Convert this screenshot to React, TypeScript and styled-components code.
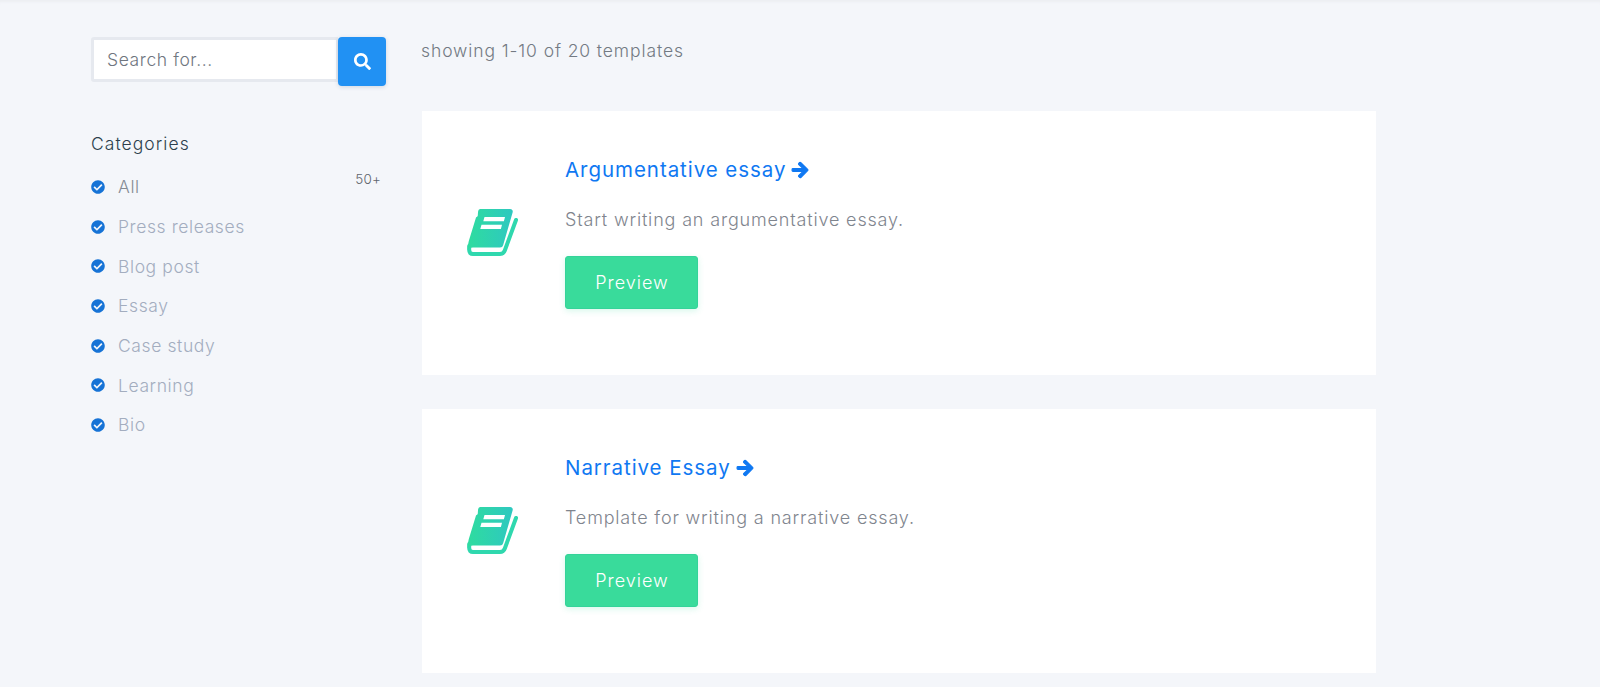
import React from 'react'
import styled, { createGlobalStyle } from 'styled-components';
import { FaArrowRight, FaCheckCircle, FaSearch } from 'react-icons/fa';

const CATEGORIES = ['All', 'Press releases', 'Blog post', 'Essay', 'Case study', 'Learning', 'Bio'];

const TEMPLATES = [
    { title: 'Argumentative essay', text: 'Start writing an argumentative essay.' },
    { title: 'Narrative Essay', text: 'Template for writing a narrative essay.' },
];

const GlobalStyle = createGlobalStyle`
    html, body {
        margin: 0;
        height: 687px;
        overflow: hidden;
        background: #f4f6fa;
        font-family: Inter, "Open Sans", sans-serif;
    }
`;

const Page = styled.div`
    height: 687px;
    box-sizing: border-box;
    padding: 37px 0 0 91px;
    display: flex;
    overflow: hidden;
    box-shadow: inset 0 4px 3px -2px #eceef2;
`;

const Sidebar = styled.aside`
    width: 331px;
    flex: none;
`;

const SearchRow = styled.div`
    display: flex;
    width: 295px;
    align-items: flex-start;
`;

const SearchInput = styled.input`
    width: 247px;
    height: 45px;
    box-sizing: border-box;
    border: 3px solid #e6e9ef;
    border-right-width: 2px;
    border-radius: 3px 0 0 3px;
    padding: 0 13px;
    background: #fff;
    font: 300 17.5px Inter, sans-serif;
    letter-spacing: 0.6px;
    outline: none;

    &::placeholder {
        color: #6f7680;
        opacity: 1;
    }
`;

const SearchButton = styled.button`
    width: 48px;
    height: 49px;
    border: 0;
    padding: 0;
    border-radius: 4px;
    background: #2191f3;
    color: #fff;
    display: flex;
    align-items: center;
    justify-content: center;
    font-size: 17px;
    box-shadow: 0 1px 4px rgba(60, 90, 130, 0.2);
`;

const SideTitle = styled.h3`
    margin: 46px 0 0;
    font-size: 17.5px;
    line-height: 24px;
    font-weight: 300;
    letter-spacing: 1.05px;
    color: #2c3f4d;
`;

const CategoryList = styled.ul`
    list-style: none;
    width: 290px;
    margin: 11px 0 0;
    padding: 0;
`;

const CategoryItem = styled.li<{ $active?: boolean }>`
    position: relative;
    height: 39.7px;
    display: flex;
    align-items: center;
    gap: 13px;
    font-size: 17.5px;
    font-weight: 300;
    letter-spacing: 0.6px;
    color: ${p => (p.$active ? '#858b94' : '#a3adbf')};

    svg {
        color: #1673d6;
        font-size: 14px;
        flex: none;
    }
`;

const Count = styled.span`
    position: absolute;
    right: 0;
    top: 4px;
    font-size: 13.5px;
    font-weight: 300;
    letter-spacing: 0.2px;
    color: #5f656d;
`;

const Content = styled.main`
    width: 954px;
    flex: none;
`;

const Showing = styled.p`
    margin: 0 0 46px;
    height: 28px;
    line-height: 28px;
    font-size: 17.5px;
    font-weight: 300;
    letter-spacing: 0.9px;
    color: #737a83;
    transform: translateX(-1px);
`;

const Card = styled.section`
    height: 264px;
    box-sizing: border-box;
    margin-bottom: 34px;
    padding: 33px 46px 55px 45px;
    background: #fff;
    display: flex;
    align-items: center;
`;

const IconBox = styled.div`
    width: 98px;
    flex: none;
    display: flex;
`;

const CardBody = styled.div``;

const CardTitle = styled.h4`
    margin: 0;
    display: flex;
    align-items: center;
    gap: 5px;
    font-size: 20.5px;
    line-height: 30px;
    font-weight: 400;
    letter-spacing: 0.95px;
    color: #0f78f2;

    svg {
        font-size: 18px;
        stroke-width: 36px;
        stroke-linejoin: round;
    }
`;

const CardText = styled.p`
    margin: 22px 0 0;
    font-size: 18px;
    line-height: 26px;
    font-weight: 300;
    letter-spacing: 0.83px;
    color: #7f858e;
`;

const PreviewButton = styled.button`
    display: block;
    width: 133px;
    height: 53px;
    margin-top: 23px;
    padding: 0 0 0 1px;
    border: 1px solid #34d399;
    border-radius: 3px;
    background: #39db9b;
    color: #fff;
    font: 300 18px/1 Inter, sans-serif;
    letter-spacing: 1px;
    box-shadow: 0 2px 6px rgba(57, 219, 155, 0.2);
`;

const BookIcon: React.FC<{ id: string }> = ({ id }) => (
    <svg width="51" height="47" viewBox="0 0 51 47">
        <defs>
            <linearGradient id={id} x1="0" y1="0" x2="1" y2="0">
                <stop offset="0" stopColor="#2fdc9f" />
                <stop offset="1" stopColor="#2ec8c0" />
            </linearGradient>
        </defs>
        <path
            d="M49 11 L37.800 41.500 Q36.500 45 33 45 H6 Q2.200 45 2.200 41 V37"
            fill="none"
            stroke="#2fd8ae"
            strokeWidth="4"
            strokeLinecap="round"
        />
        <path
            d="M13.500 0H43c2.200 0 3.200 1.500 2.600 3.500L36.200 36c-.5 1.700-1.500 2.500-3.200 2.500H6C3.500 38.500 1.200 39.500.5 41 .5 38 1 35 1.800 32L9 8.500c.8-.5 1.500-.9 1.800-1.900L11 3c.3-2 1-3 2.500-3z"
            fill={`url(#${id})`}
        />
        <path d="M17.500 8h20.500l-1.100 4.200H16.300zM14.500 15.700h20.500l-1.100 4.200H13.300z" fill="#fff" />
    </svg>
);

const App: React.FC = () => {
    return (
        <Page>
            <GlobalStyle />
            <Sidebar>
                <SearchRow>
                    <SearchInput placeholder="Search for..." />
                    <SearchButton aria-label="Search"><FaSearch /></SearchButton>
                </SearchRow>
                <SideTitle>Categories</SideTitle>
                <CategoryList>
                    {
                        CATEGORIES.map((category, index) => (
                            <CategoryItem key={category} $active={index === 0}>
                                <FaCheckCircle />
                                {category}
                                {index === 0 && <Count>50+</Count>}
                            </CategoryItem>
                        ))
                    }
                </CategoryList>
            </Sidebar>
            <Content>
                <Showing>showing 1-10 of 20 templates</Showing>
                {
                    TEMPLATES.map((template, index) => (
                        <Card key={template.title}>
                            <IconBox><BookIcon id={`book-${index}`} /></IconBox>
                            <CardBody>
                                <CardTitle>{template.title} <FaArrowRight /></CardTitle>
                                <CardText>{template.text}</CardText>
                                <PreviewButton>Preview</PreviewButton>
                            </CardBody>
                        </Card>
                    ))
                }
            </Content>
        </Page>
    );
}

export default App
